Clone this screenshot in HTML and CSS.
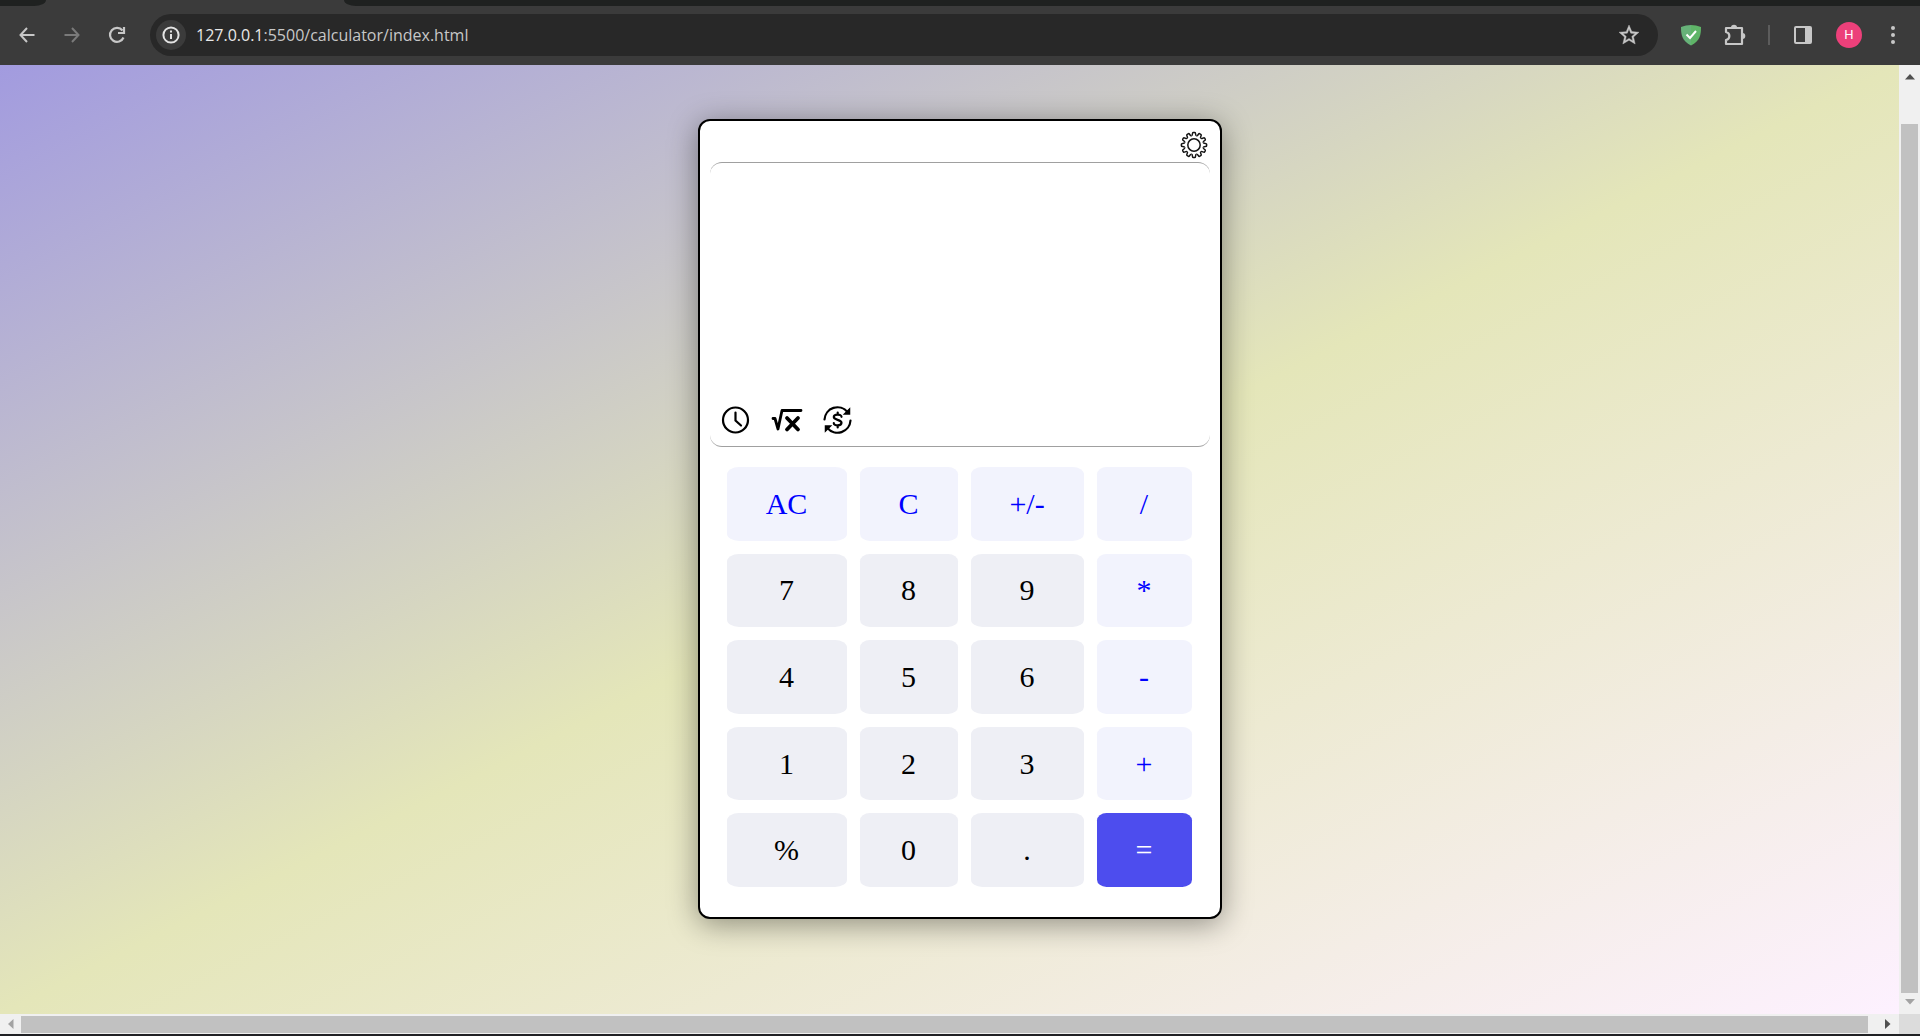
FILE: index.html
```html
<!DOCTYPE html>
<html lang="en">
<head>
<meta charset="utf-8">
<title>Calculator</title>
<link rel="stylesheet" href="styles.css">
</head>
<body>
<div class="tabstrip"><span class="tab-left"></span><span class="tab-active"></span><span class="tab-rest"></span></div>
<header class="toolbar">
  <nav class="nav">
    <button class="icon-btn" aria-label="Back"><svg width="20" height="20" viewBox="0 0 20 20" fill="none" stroke="#c7c7c7" stroke-width="2"><path d="M17.500 10H4M10 3L3.500 10L10 17"/></svg></button>
    <button class="icon-btn" aria-label="Forward" disabled><svg width="20" height="20" viewBox="0 0 20 20" fill="none" stroke="#7a7a7a" stroke-width="2"><path d="M2.500 10H16M10 3L16.500 10L10 17"/></svg></button>
    <button class="icon-btn" aria-label="Reload"><svg width="20" height="20" viewBox="0 0 20 20" fill="none" stroke="#c7c7c7" stroke-width="2.200"><path d="M16.500 12.500A7 7 0 1 1 15.500 5.500"/><path d="M17 2V8H11"/></svg></button>
  </nav>
  <form class="omnibox">
    <button type="button" class="info" aria-label="Site information"><svg width="18" height="18" viewBox="0 0 18 18" fill="none" stroke="#e3e3e3" stroke-width="2"><circle cx="9" cy="9" r="7.600"/><path d="M9 8V13M9 4.500V6.500"/></svg></button>
    <span class="url"><span class="host">127.0.0.1</span>:5500/calculator/index.html</span>
    <button type="button" class="star" aria-label="Bookmark"><svg width="24" height="24" viewBox="0 0 24 24" fill="#c7c7c7" stroke="#c7c7c7" stroke-width=".4"><path d="M22 9.240l-7.190-.620L12 2 9.190 8.630 2 9.240l5.460 4.730L5.820 21 12 17.270 18.180 21l-1.630-7.030L22 9.240zM12 15.400l-3.760 2.270 1-4.280-3.320-2.880 4.380-.380L12 6.100l1.710 4.040 4.380.380-3.320 2.880 1 4.280L12 15.400z"/></svg></button>
  </form>
  <div class="actions">
    <button class="icon-btn" aria-label="Ad blocker"><svg width="22" height="22" viewBox="0 0 22 22"><path d="M11 1C14 1 18 1.700 21 3C21 11 20 17 11 21.500Z" fill="#5fb568"/><path d="M11 1C8 1 4 1.700 1 3C1 11 2 17 11 21.500Z" fill="#67b279"/><path d="M6.500 10.500L10 14L16 7" fill="none" stroke="#fff" stroke-width="2"/></svg></button>
    <button class="icon-btn" aria-label="Extensions"><svg width="22" height="22" viewBox="0 0 22 22" fill="none" stroke="#c7c7c7" stroke-width="2.200"><path d="M2 4H18V20H2V16C6.500 15 6.500 9 2 8Z" stroke-linejoin="round"/><path d="M7 3.500A3 2.800 0 0 1 13 3.500ZM18.500 9A2.800 3 0 0 1 18.500 15Z" fill="#c7c7c7" stroke="none"/></svg></button>
    <span class="divider"></span>
    <button class="icon-btn" aria-label="Side panel"><svg width="20" height="20" viewBox="0 0 20 20"><rect x="2" y="2" width="16" height="16" rx="1" fill="none" stroke="#c7c7c7" stroke-width="2"/><path d="M12 2H18V18H12Z" fill="#c7c7c7"/></svg></button>
    <button class="avatar" aria-label="Profile">H</button>
    <button class="menu" aria-label="Menu"><svg width="6" height="20" viewBox="0 0 6 20" fill="#c7c7c7"><circle cx="3" cy="3" r="2"/><circle cx="3" cy="10" r="2"/><circle cx="3" cy="17" r="2"/></svg></button>
  </div>
</header>
<div class="viewport">
  <main class="page">
    <section class="calculator">
      <div class="top">
        <button class="tool" aria-label="Settings"><svg width="28" height="28" viewBox="-14 -14 28 28" fill="none" stroke="#151515" stroke-width="1.500" stroke-linejoin="round">
          <defs><path id="tooth" d="M-2.480 -9.270C-.900 -9.700 -2.100 -12.500 -.900 -12.600H.900C2.100 -12.500 .900 -9.700 2.480 -9.270"/></defs>
          <use href="#tooth"/><use href="#tooth" transform="rotate(30)"/><use href="#tooth" transform="rotate(60)"/><use href="#tooth" transform="rotate(90)"/><use href="#tooth" transform="rotate(120)"/><use href="#tooth" transform="rotate(150)"/><use href="#tooth" transform="rotate(180)"/><use href="#tooth" transform="rotate(210)"/><use href="#tooth" transform="rotate(240)"/><use href="#tooth" transform="rotate(270)"/><use href="#tooth" transform="rotate(300)"/><use href="#tooth" transform="rotate(330)"/>
          <circle r="6.200"/></svg></button>
      </div>
      <div class="display">
        <button class="tool" aria-label="History"><svg width="30" height="30" viewBox="0 0 30 30" fill="none" stroke="#000" stroke-width="2.200" stroke-linecap="round"><circle cx="14.500" cy="15" r="12.500"/><path d="M14.500 7.500V15.500L20 20.500"/></svg></button>
        <button class="tool" aria-label="Scientific"><svg width="32" height="30" viewBox="0 0 32 30" fill="none" stroke="#000" stroke-linecap="round" stroke-linejoin="round"><path d="M2 13.500H4L7 24L11 5.500H30" stroke-width="2.800"/><path d="M16 13L27 24.500M27 13L16 24.500" stroke-width="3.800"/></svg></button>
        <button class="tool" aria-label="Currency"><svg width="30" height="30" viewBox="0 0 30 30" fill="none" stroke="#000" stroke-width="2.200" stroke-linecap="round"><path d="M1.500 14.500A13 13 0 0 1 24.500 7M27.500 15.500A13 13 0 0 1 4.500 23"/><path d="M26.500 4V9H21.500ZM2.500 26V21H7.500Z" fill="#000" stroke-width="1.500"/><path d="M18.500 11.800C18.500 8.800 10.800 8.800 10.800 12C10.800 15.200 18.500 14.500 18.500 17.800C18.500 21.200 10.800 21.200 10.800 18.200M14.700 7.500V9.500M14.700 20.500V22.500"/></svg></button>
      </div>
      <div class="keys">
        <button class="key op">AC</button><button class="key op">C</button><button class="key op">+/-</button><button class="key op">/</button>
        <button class="key">7</button><button class="key">8</button><button class="key">9</button><button class="key op">*</button>
        <button class="key">4</button><button class="key">5</button><button class="key">6</button><button class="key op">-</button>
        <button class="key">1</button><button class="key">2</button><button class="key">3</button><button class="key op">+</button>
        <button class="key">%</button><button class="key">0</button><button class="key">.</button><button class="key equals">=</button>
      </div>
    </section>
  </main>
  <div class="vbar">
    <svg width="10" height="6" viewBox="0 0 10 6"><path d="M0 5.500L5 0L10 5.500Z" fill="#505050"/></svg>
    <span class="thumb"></span>
    <svg width="10" height="6" viewBox="0 0 10 6"><path d="M0 0L5 5.500L10 0Z" fill="#a3a3a3"/></svg>
  </div>
  <div class="hbar">
    <svg width="6" height="10" viewBox="0 0 6 10"><path d="M5.500 0L0 5L5.500 10Z" fill="#a3a3a3"/></svg>
    <span class="thumb"></span>
    <svg width="6" height="10" viewBox="0 0 6 10"><path d="M0 0L5.500 5L0 10Z" fill="#505050"/></svg>
  </div>
  <div class="corner"></div>
</div>
</body>
</html>
```
FILE: styles.css
```css
* { box-sizing: border-box; }
body {
  margin: 0;
  height: 100vh;
  display: flex;
  flex-direction: column;
  overflow: hidden;
  background: #202124;
  font-family: "Liberation Serif", serif;
}
button { border: 0; padding: 0; background: none; color: inherit; font: inherit; }
svg { display: block; }

/* Browser chrome */
.tabstrip { display: flex; flex: none; height: 6px; background: #3b3b3b; }
.tab-left { width: 46px; background: #1f2120; border-bottom-right-radius: 12px 6px; }
.tab-active { width: 298px; }
.tab-rest { flex: 1; background: #1f2120; border-bottom-left-radius: 12px 6px; }
.toolbar {
  display: flex;
  flex: none;
  align-items: center;
  height: 59px;
  padding: 0 24px 2px 17px;
  background: #3b3b3b;
}
.nav { display: flex; gap: 25px; width: 133px; }
.icon-btn { display: grid; place-items: center; flex: none; }
.omnibox {
  display: flex;
  flex: 1;
  align-items: center;
  height: 42px;
  padding: 0 17px 0 6px;
  border-radius: 21px;
  background: #282828;
}
.info { display: grid; place-items: center; width: 30px; height: 30px; border-radius: 50%; background: #3b3b3b; }
.url { flex: 1; margin-left: 10px; color: #c7c7c7; font: 16px/24px "Open Sans", sans-serif; }
.host { color: #e8e8e8; }
.actions { display: flex; align-items: center; gap: 22px; margin-left: 22px; }
.actions .icon-btn { width: 22px; }
.divider { width: 2px; height: 20px; background: #5c5c5c; }
.avatar {
  width: 26px;
  height: 26px;
  border-radius: 50%;
  background: #ec407a;
  color: #fff;
  font: 13px/26px Roboto, sans-serif;
}
.menu { margin-left: 6px; }

/* Page area with scroll bars */
.viewport {
  display: grid;
  flex: 1;
  grid-template-columns: 1fr 21px;
  grid-template-rows: 1fr 20px;
  min-height: 0;
  margin-bottom: 2px;
}
.page {
  display: flex;
  justify-content: center;
  align-items: flex-start;
  padding: 54px 0 0 20px;
  overflow: hidden;
  background: linear-gradient(to bottom right, #a29bdf, #e4e6b9, #fdf1ff);
}
.vbar { display: flex; flex-direction: column; align-items: center; padding: 9px 0; background: #f0f0f0; }
.vbar .thumb { flex: 1; width: 17px; margin: 44px 0 6px; background: #c1c1c1; }
.hbar { display: flex; align-items: center; padding: 0 8px; background: #f0f0f0; }
.hbar .thumb { flex: 1; height: 17px; margin: 0 17px 0 7px; background: #c1c1c1; }
.corner { background: #dcdcdc; }

/* Calculator */
.calculator {
  width: 524px;
  padding: 10px 10px 30px;
  border: 2px solid #000;
  border-radius: 12px;
  background: #fff;
  box-shadow: 0 5px 30px rgba(0, 0, 0, 0.4);
}
.top { display: flex; justify-content: flex-end; align-items: flex-start; height: 31px; padding-right: 2px; }
.display {
  display: flex;
  align-items: flex-end;
  gap: 20px;
  height: 285px;
  padding: 0 11px 11px;
  border: solid #a0a0a0;
  border-width: 1px 0;
  border-radius: 12px;
}
.keys {
  display: grid;
  grid-template-columns: 120fr 98fr 113fr 95fr;
  grid-template-rows: repeat(5, 1fr);
  gap: 13px;
  height: 420px;
  margin: 20px 18px 0 17px;
}
.key {
  border-radius: 10%;
  background: #eeeff5;
  color: #000;
  font-size: 30px;
  line-height: 36px;
}
.op { background: #f2f3fd; color: #00f; }
.equals { background: #4d4dee; color: #fff; }
```
